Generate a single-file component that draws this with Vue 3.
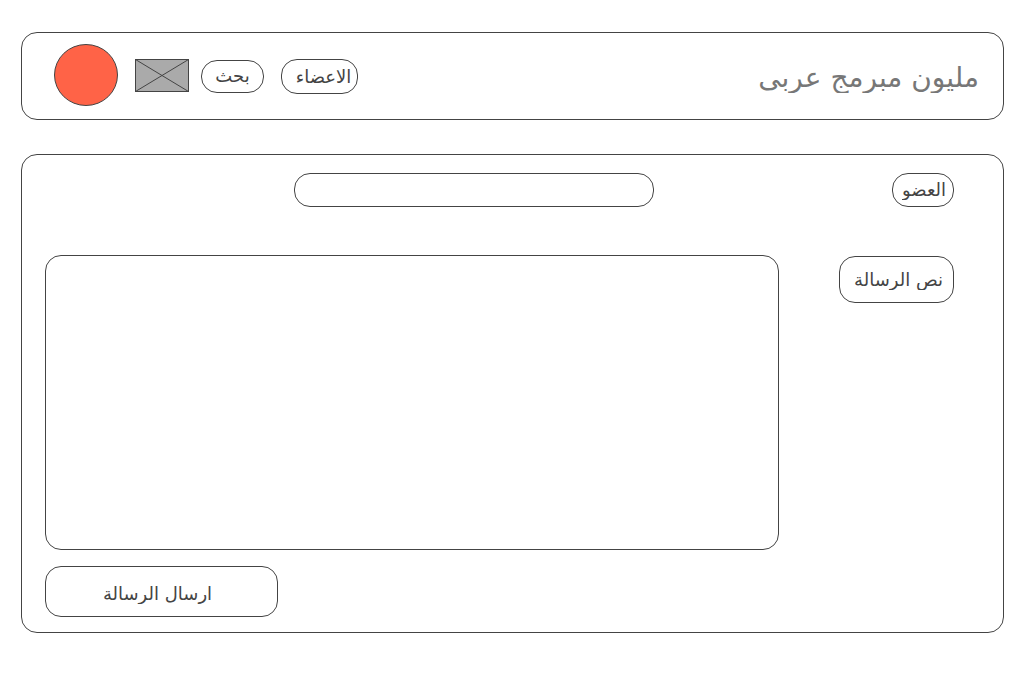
<script setup>
import { ref } from 'vue'
const member = ref('')
const message = ref('')
</script>

<template>
  <main class="page" dir="rtl" lang="ar">
    <header class="panel header">
      <h1 class="title">مليون مبرمج عربى</h1>
      <nav class="nav">
        <button type="button" class="box members">الاعضاء</button>
        <button type="button" class="box search">بحث</button>
        <svg class="image" viewBox="0 0 54 33" aria-hidden="true">
          <rect x=".5" y=".5" width="53" height="32" fill="#aaa" stroke="#444" />
          <path d="M.5.5l53 32M53.5.5l-53 32" fill="none" stroke="#444" />
        </svg>
        <svg class="avatar" viewBox="0 0 64 62" aria-hidden="true">
          <ellipse cx="32" cy="31" rx="31.5" ry="30.5" fill="#ff6347" stroke="#444" />
        </svg>
      </nav>
    </header>
    <form class="panel form" @submit.prevent>
      <div class="row">
        <label class="box member-label" for="member"><span class="text">العضو</span></label>
        <input id="member" v-model="member" class="box member-input" type="text" />
      </div>
      <div class="row message-row">
        <label class="box message-label" for="message"><span class="text">نص الرسالة</span></label>
        <textarea id="message" v-model="message" class="box message-input"></textarea>
      </div>
      <button type="submit" class="box send"><span class="text">ارسال الرسالة</span></button>
    </form>
  </main>
</template>

<style>
body { background: #fff; }
</style>

<style scoped>
.page, .page * { box-sizing: border-box; }
.page {
  padding: 32px 20px 40px 21px;
  color: #444;
  font: 18px/20px "DejaVu Sans", sans-serif;
}
.panel {
  border: 1px solid #444;
  border-radius: 16px;
}
.box {
  display: flex;
  align-items: center;
  justify-content: center;
  margin: 0;
  padding: 0;
  border: 1px solid #444;
  border-radius: 16px;
  background: #fff;
  color: #444;
  font: inherit;
}
.text {
  display: block;
  overflow: hidden;
  white-space: nowrap;
}
.header {
  display: flex;
  align-items: center;
  justify-content: space-between;
  height: 88px;
  padding: 0 24px 0 32px;
}
.title {
  margin: 4px 0 0;
  overflow: hidden;
  color: #777;
  font-size: 28px;
  font-weight: 400;
  line-height: 30px;
}
.nav { display: flex; align-items: center; }
.members { width: 77px; height: 35px; padding: 2px 0 0 8px; }
.search { width: 63px; height: 33px; margin-right: 17px; }
.image { width: 54px; height: 33px; margin: 0 12px 2px 0; }
.avatar { width: 64px; height: 62px; margin: 0 17px 2px 0; }
.form {
  display: flex;
  flex-direction: column;
  margin-top: 34px;
  padding: 18px 49px 15px 23px;
}
.row { display: flex; align-items: flex-start; justify-content: space-between; }
.member-label { width: 62px; height: 34px; padding-left: 2px; }
.member-input { width: 360px; height: 34px; padding: 0 12px; margin-left: 249px; }
.message-row { margin-top: 48px; gap: 60px; }
.message-label { flex: none; width: 115px; height: 47px; margin-top: 1px; padding-left: 4px; }
.message-input { flex: 1; height: 295px; padding: 12px; resize: none; }
.send { align-self: flex-end; width: 233px; height: 51px; margin-top: 16px; padding: 5px 8px 0 0; }
</style>
